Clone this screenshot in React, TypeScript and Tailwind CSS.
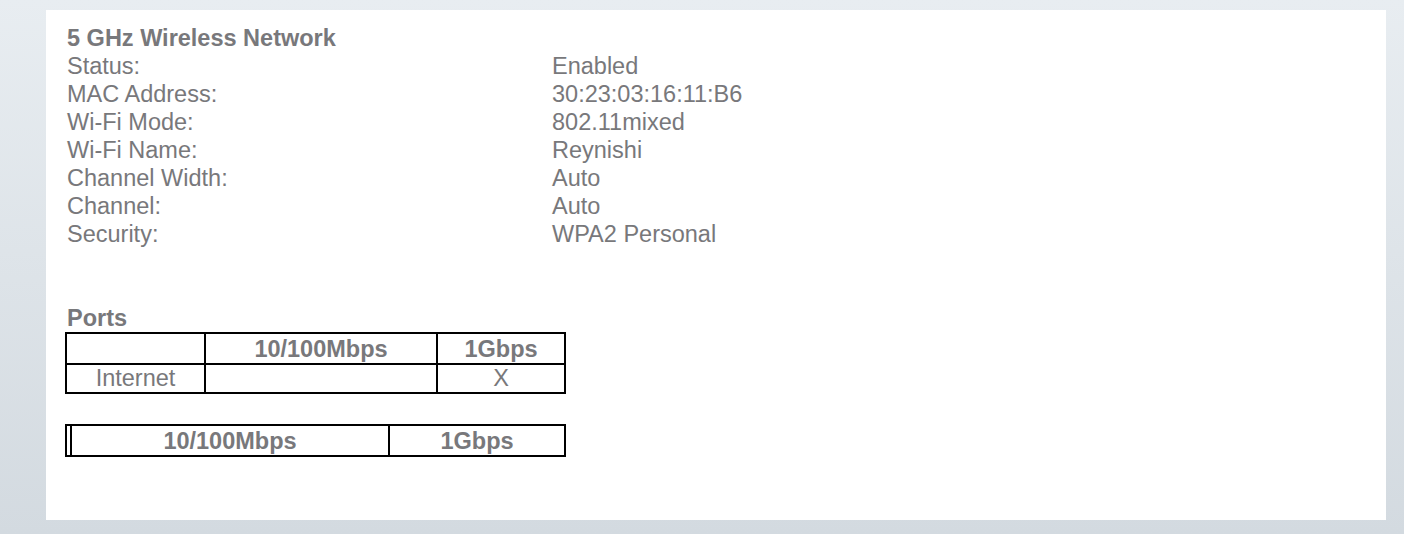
import React from "react";

const rows: [string, string][] = [
  ["Status:", "Enabled"],
  ["MAC Address:", "30:23:03:16:11:B6"],
  ["Wi-Fi Mode:", "802.11mixed"],
  ["Wi-Fi Name:", "Reynishi"],
  ["Channel Width:", "Auto"],
  ["Channel:", "Auto"],
  ["Security:", "WPA2 Personal"],
];

export default function App() {
  return (
    <div
      className="w-[1404px] h-[534px] bg-gradient-to-b from-[#e8edf1] to-[#d3dae0] pt-[10px] pl-[46px]"
      style={{ fontFamily: '"Liberation Sans", Arial, sans-serif' }}
    >
      <div className="w-[1340px] h-[510px] bg-white pl-[21px] pt-[14px] text-[#78787b] text-[23.5px] leading-[28px]">
        <div className="font-bold">5 GHz Wireless Network</div>
        {rows.map(([k, v]) => (
          <div key={k} className="flex">
            <div className="w-[485px]">{k}</div>
            <div>{v}</div>
          </div>
        ))}
        <div className="h-[56px]" />
        <div className="font-bold">Ports</div>
        <table className="border-collapse border-2 border-black w-[501px] text-center -ml-[2px]">
          <tbody>
            <tr className="h-[31px]">
              <td className="border-2 border-black w-[139px] p-0 leading-[26px]"></td>
              <td className="border-2 border-black w-[232px] p-0 leading-[26px] font-bold">10/100Mbps</td>
              <td className="border-2 border-black p-0 leading-[26px] font-bold">1Gbps</td>
            </tr>
            <tr className="h-[29px]">
              <td className="border-2 border-black p-0 leading-[25px]">Internet</td>
              <td className="border-2 border-black p-0 leading-[25px]"></td>
              <td className="border-2 border-black p-0 leading-[25px]">X</td>
            </tr>
          </tbody>
        </table>
        <div className="h-[30px]" />
        <table className="border-collapse border-2 border-black w-[501px] text-center -ml-[2px]">
          <tbody>
            <tr className="h-[31px]">
              <td className="border-2 border-black w-[5px] p-0"></td>
              <td className="border-2 border-black w-[318px] p-0 leading-[26px] font-bold">10/100Mbps</td>
              <td className="border-2 border-black p-0 leading-[26px] font-bold">1Gbps</td>
            </tr>
          </tbody>
        </table>
      </div>
    </div>
  );
}
